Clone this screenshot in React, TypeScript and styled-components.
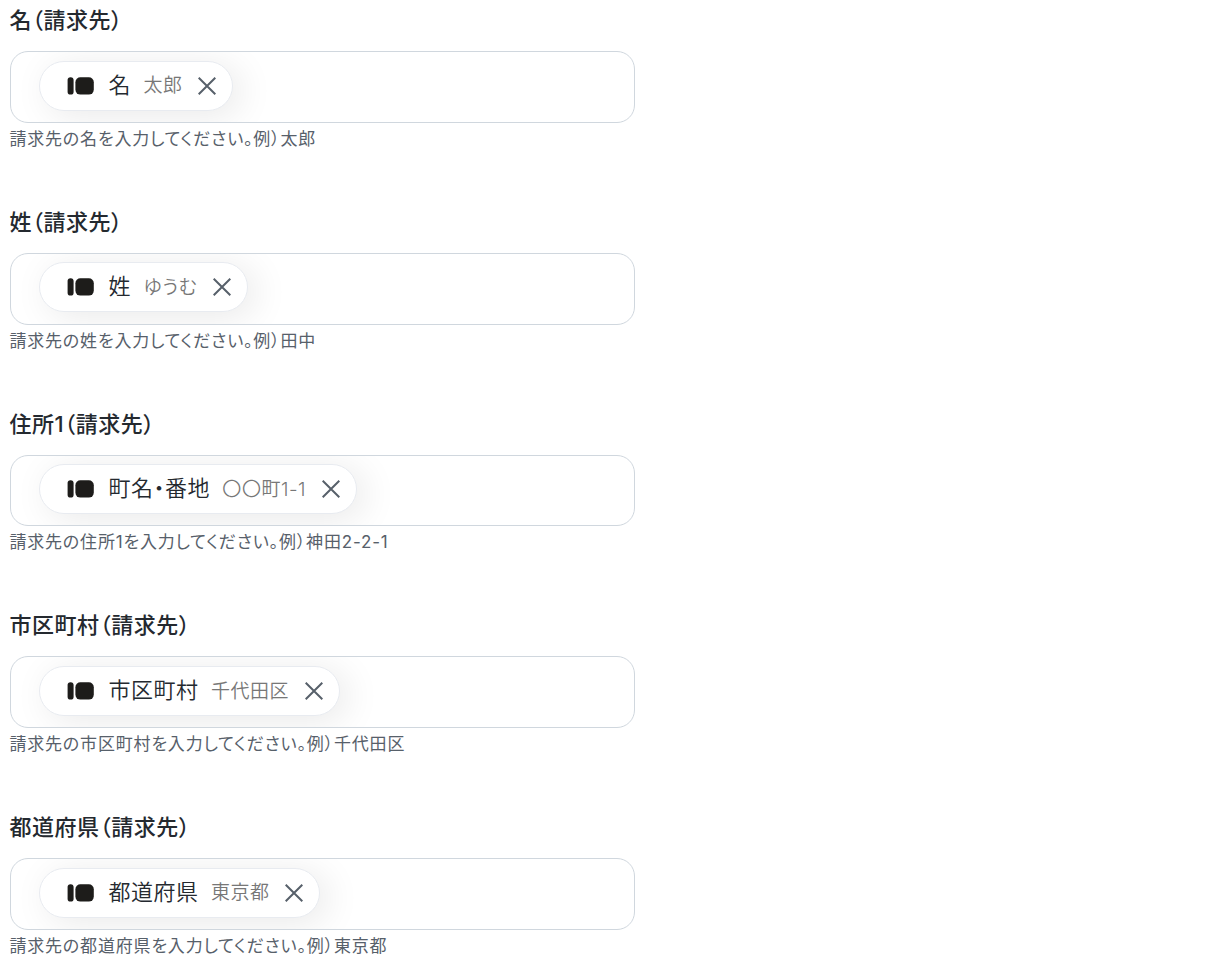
import styled, { createGlobalStyle } from "styled-components";

interface Field {
  name: string;
  chipLabel: string;
  sample: string;
  help: string;
}

const fields: Field[] = [
  { name: "名（請求先）", chipLabel: "名", sample: "太郎", help: "請求先の名を入力してください。例）太郎" },
  { name: "姓（請求先）", chipLabel: "姓", sample: "ゆうむ", help: "請求先の姓を入力してください。例）田中" },
  { name: "住所1（請求先）", chipLabel: "町名・番地", sample: "〇〇町1-1", help: "請求先の住所1を入力してください。例）神田2-2-1" },
  { name: "市区町村（請求先）", chipLabel: "市区町村", sample: "千代田区", help: "請求先の市区町村を入力してください。例）千代田区" },
  { name: "都道府県（請求先）", chipLabel: "都道府県", sample: "東京都", help: "請求先の都道府県を入力してください。例）東京都" },
];

const App = () => {
  return (
    <>
      <GlobalStyle />
      <Form>
        {fields.map((field) => (
          <FieldGroup key={field.name}>
            <Label>{field.name}</Label>
            <InputBox>
              <Chip>
                <SourceIcon viewBox="0 0 28 20">
                  <rect x="0.6" y="1.2" width="6" height="17.4" rx="2.9" />
                  <rect x="8.4" y="1.2" width="18.4" height="17.4" rx="5" />
                </SourceIcon>
                <ChipLabel>{field.chipLabel}</ChipLabel>
                <Sample>{field.sample}</Sample>
                <RemoveButton aria-label="削除">
                  <svg width="18" height="18" viewBox="0 0 18 18">
                    <path d="M0.7 0.7l16.6 16.6M17.3 0.7L0.7 17.3" fill="none" stroke="#57606a" strokeWidth="2" />
                  </svg>
                </RemoveButton>
              </Chip>
            </InputBox>
            <Help>{field.help}</Help>
          </FieldGroup>
        ))}
      </Form>
    </>
  );
};

// Styling
const GlobalStyle = createGlobalStyle`
  body {
    margin: 0;
    background: #fff;
    overflow: hidden;
    font-family: Inter, "Noto Sans CJK JP", sans-serif;
    font-feature-settings: "palt";
  }
`;

const Form = styled.form`
  box-sizing: border-box;
  display: flex;
  flex-direction: column;
  height: 961px;
  padding: 3.75px 10px 0;
  overflow: hidden;
`;

const FieldGroup = styled.div`
  width: 625px;
  height: 201.89px;
  flex: none;
`;

const Label = styled.div`
  height: 47px;
  margin-left: -0.6px;
  line-height: 33.6px;
  font-size: 22px;
  font-weight: 500;
  letter-spacing: 0.55px;
  color: #24292f;
`;

const InputBox = styled.div`
  box-sizing: border-box;
  display: flex;
  align-items: flex-start;
  height: 71.9px;
  padding: 8.8px 28px 0;
  border: 1px solid #d0d7de;
  border-radius: 18px;
  overflow: hidden;
`;

const Chip = styled.div`
  box-sizing: border-box;
  display: flex;
  align-items: center;
  height: 50px;
  padding: 0 16px 0 27px;
  border: 1px solid #e8ebf0;
  border-radius: 25px;
  background: #fff;
  box-shadow: 8px 5px 36px rgba(0, 0, 0, 0.09);
  white-space: nowrap;
`;

const SourceIcon = styled.svg`
  width: 28px;
  height: 20px;
  margin-right: 13.5px;
  fill: #1d1c1a;
`;

const ChipLabel = styled.span`
  padding-bottom: 6px;
  font-size: 22px;
  font-weight: 350;
  letter-spacing: 0.47px;
  color: #24292f;
`;

const Sample = styled.span`
  margin-left: 12.5px;
  padding-bottom: 4.2px;
  font-size: 19px;
  font-weight: 350;
  letter-spacing: 0.52px;
  color: #777;
`;

const RemoveButton = styled.button`
  display: flex;
  margin-left: 15.7px;
  padding: 0 0.2px 0 0;
  border: none;
  background: none;
  cursor: pointer;
`;

const Help = styled.div`
  margin-left: -0.6px;
  line-height: 32px;
  font-size: 17px;
  font-weight: 400;
  letter-spacing: 0.82px;
  color: #57606a;
`;

export default App;
